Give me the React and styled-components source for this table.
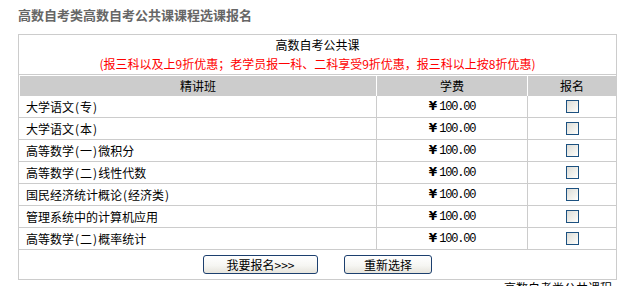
import React from "react";
import styled, { createGlobalStyle } from "styled-components";

const GlobalStyle = createGlobalStyle`
  html, body { margin: 0; padding: 0; background: #fff; }
  body {
    font-family: "Noto Sans CJK SC", "Noto Sans", sans-serif;
    font-size: 12px;
    color: #000;
  }
`;

const Page = styled.div`
  width: 599px;
  padding: 5px 0 0 18px;
`;

const Title = styled.h1`
  margin: 0 0 9px;
  font-size: 13px;
  line-height: 20px;
  font-weight: bold;
  color: #666;
`;

const Panel = styled.div`
  border: 1px solid #ccc;
`;

const Caption = styled.div`
  text-align: center;
  padding: 1px 0 2px;
  border-bottom: 1px solid #ccc;
`;

const CaptionLine = styled.div`
  line-height: 17px;
  color: ${(p) => (p.$red ? "#ff0000" : "#000")};
  margin-top: ${(p) => (p.$red ? "2px" : "0")};
`;

const COLS = "357px 150px 88px";

const HeaderRow = styled.div`
  display: grid;
  grid-template-columns: 356px 150px 88px;
  column-gap: 1px;
  padding: 1px 0 0 1px;
  background: #fff;
`;

const HeaderCell = styled.div`
  background: #ccc;
  line-height: 20px;
  height: 20px;
  text-align: center;
`;

const Row = styled.div`
  display: grid;
  grid-template-columns: ${COLS};
  column-gap: 1px;
  background: #ccc;
  border-bottom: 1px solid #ccc;
`;

const Cell = styled.div`
  background: #fff;
  height: 21px;
  line-height: 21px;
  display: flex;
  align-items: center;
  justify-content: ${(p) => (p.$align === "left" ? "flex-start" : "center")};
  padding-left: ${(p) => (p.$align === "left" ? "7px" : "0")};
`;

const Paren = styled.span`
  margin: 0 1px;
`;

const Price = styled.span`
  display: inline-flex;
  align-items: baseline;
`;

const Yen = styled.span`
  font-family: "DejaVu Sans", sans-serif;
  font-weight: bold;
  font-size: 12px;
  margin-right: 2px;
`;

const Num = styled.span`
  font-family: "Liberation Mono", monospace;
  font-size: 12px;
  letter-spacing: -1.2px;
`;

const Check = styled.input.attrs({ type: "checkbox" })`
  appearance: none;
  -webkit-appearance: none;
  margin: 0;
  width: 13px;
  height: 13px;
  border: 1px solid #1c5180;
  background: linear-gradient(135deg, #dcdcd7 0%, #f4f4f0 70%, #ffffff 100%);
  box-sizing: border-box;
`;

const Actions = styled.div`
  height: 29px;
  box-sizing: border-box;
  padding-top: 5px;
  display: flex;
  justify-content: center;
  align-items: flex-start;
  gap: 26px;
`;

const Button = styled.button`
  height: 19px;
  width: ${(p) => p.$w}px;
  box-sizing: border-box;
  padding: 0;
  border: 1px solid #1c3f6e;
  border-radius: 3px;
  background: linear-gradient(180deg, #ffffff 0%, #f6f6f3 55%, #e6e4dc 100%);
  font-family: "Noto Sans CJK SC", sans-serif;
  font-size: 12px;
  line-height: 17px;
  color: #000;
`;

const Footer = styled.div`
  text-align: right;
  padding-right: 5px;
  line-height: 16px;
`;

const courses = [
  ["大学语文", "(专)", ""],
  ["大学语文", "(本)", ""],
  ["高等数学", "(一)", "微积分"],
  ["高等数学", "(二)", "线性代数"],
  ["国民经济统计概论", "(经济类)", ""],
  ["管理系统中的计算机应用", "", ""],
  ["高等数学", "(二)", "概率统计"],
];

function CourseName({ parts }) {
  const [a, p, b] = parts;
  return (
    <span>
      {a}
      {p && (
        <>
          <Paren>(</Paren>
          {p.slice(1, -1)}
          <Paren>)</Paren>
        </>
      )}
      {b}
    </span>
  );
}

export default function App() {
  return (
    <>
      <GlobalStyle />
      <Page>
        <Title>高数自考类高数自考公共课课程选课报名</Title>
        <Panel>
          <Caption>
            <CaptionLine>高数自考公共课</CaptionLine>
            <CaptionLine $red>
              (报三科以及上9折优惠；老学员报一科、二科享受9折优惠，报三科以上按8折优惠)
            </CaptionLine>
          </Caption>
          <HeaderRow>
            <HeaderCell>精讲班</HeaderCell>
            <HeaderCell>学费</HeaderCell>
            <HeaderCell>报名</HeaderCell>
          </HeaderRow>
          {courses.map((c) => (
            <Row key={c.join("")}>
              <Cell $align="left">
                <CourseName parts={c} />
              </Cell>
              <Cell>
                <Price>
                  <Yen>¥</Yen>
                  <Num>100.00</Num>
                </Price>
              </Cell>
              <Cell>
                <Check />
              </Cell>
            </Row>
          ))}
          <Actions>
            <Button $w={115}>我要报名&gt;&gt;&gt;</Button>
            <Button $w={88}>重新选择</Button>
          </Actions>
        </Panel>
        <Footer>&lt;&lt; 高数自考类公共课程</Footer>
      </Page>
    </>
  );
}
